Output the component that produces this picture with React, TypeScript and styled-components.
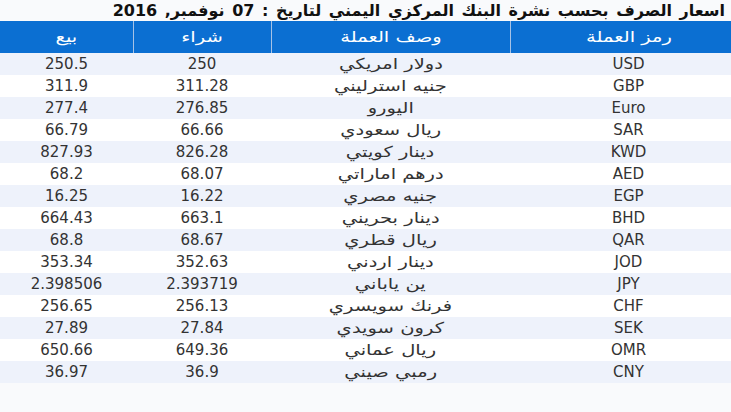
import React from "react";
import styled, { createGlobalStyle } from "styled-components";

const Global = createGlobalStyle`
  html, body { margin: 0; padding: 0; background: #f9fafc; }
  body { font-family: "DejaVu Sans", Verdana, sans-serif; }
`;

const Page = styled.div`
  width: 731px;
  direction: rtl;
`;

const Title = styled.h1`
  margin: 0;
  height: 21px;
  padding: 0 6px;
  font-size: 16px;
  font-weight: bold;
  line-height: 21px;
  word-spacing: 2px;
  color: #111;
  text-align: right;
  white-space: nowrap;
  overflow: hidden;
`;

const Wide = styled.span`
  display: inline-block;
  transform: scaleX(1.3);
`;

const Grid = styled.div<{ $h: number; $bg: string }>`
  display: grid;
  grid-template-columns: 221px 239px 138px 133px;
  height: ${(p) => p.$h}px;
  background: ${(p) => p.$bg};
`;

const HeadCell = styled.div<{ $last?: boolean; $code?: boolean }>`
  display: flex;
  align-items: center;
  justify-content: center;
  padding-left: ${(p) => (p.$code ? "16px" : "0")};
  color: #ffffff;
  font-size: 15px;
  border-left: ${(p) => (p.$last ? "none" : "1px solid #a6c2e6")};
`;

const Cell = styled.div<{ $code?: boolean }>`
  display: flex;
  align-items: center;
  justify-content: center;
  padding-left: ${(p) => (p.$code ? "16px" : "0")};
  color: #333;
  font-size: 15px;
  line-height: 22px;
  white-space: nowrap;
`;

const data: [string, string, string, string][] = [
  ["USD", "دولار امريكي", "250", "250.5"],
  ["GBP", "جنيه استرليني", "311.28", "311.9"],
  ["Euro", "اليورو", "276.85", "277.4"],
  ["SAR", "ريال سعودي", "66.66", "66.79"],
  ["KWD", "دينار كويتي", "826.28", "827.93"],
  ["AED", "درهم اماراتي", "68.07", "68.2"],
  ["EGP", "جنيه مصري", "16.22", "16.25"],
  ["BHD", "دينار بحريني", "663.1", "664.43"],
  ["QAR", "ريال قطري", "68.67", "68.8"],
  ["JOD", "دينار اردني", "352.63", "353.34"],
  ["JPY", "ين ياباني", "2.393719", "2.398506"],
  ["CHF", "فرنك سويسري", "256.13", "256.65"],
  ["SEK", "كرون سويدي", "27.84", "27.89"],
  ["OMR", "ريال عماني", "649.36", "650.66"],
  ["CNY", "رمبي صيني", "36.9", "36.97"],
];

export default function App() {
  return (
    <Page>
      <Global />
      <Title>اسعار الصرف بحسب نشرة البنك المركزي اليمني لتاريخ : 07 نوفمبر, 2016</Title>
      <Grid $h={32} $bg="#0b6fd2">
        <HeadCell $code><Wide>رمز العملة</Wide></HeadCell>
        <HeadCell><Wide>وصف العملة</Wide></HeadCell>
        <HeadCell><Wide>شراء</Wide></HeadCell>
        <HeadCell $last><Wide>بيع</Wide></HeadCell>
      </Grid>
      {data.map((r, i) => (
        <Grid key={r[0]} $h={22} $bg={i % 2 === 0 ? "#eef2fb" : "#ffffff"}>
          <Cell $code>{r[0]}</Cell>
          <Cell><Wide>{r[1]}</Wide></Cell>
          <Cell>{r[2]}</Cell>
          <Cell>{r[3]}</Cell>
        </Grid>
      ))}
    </Page>
  );
}
